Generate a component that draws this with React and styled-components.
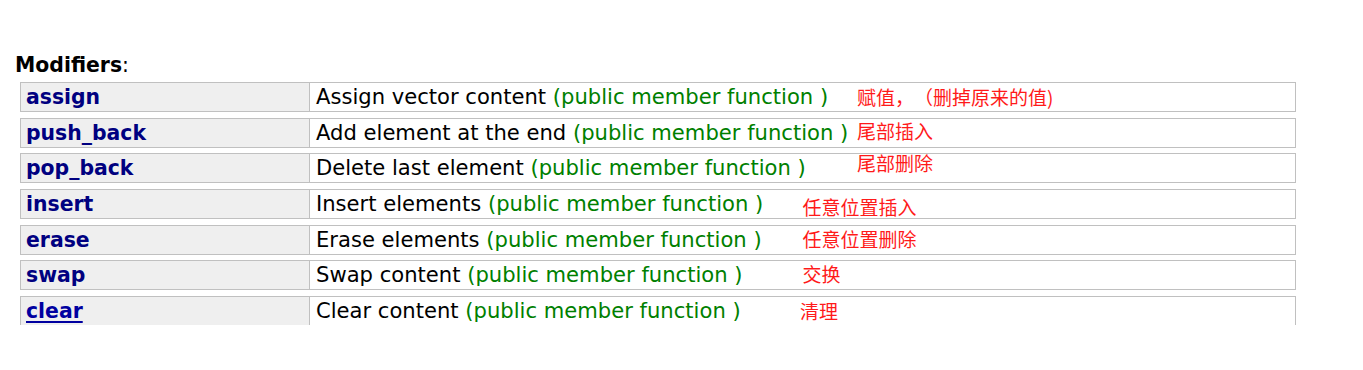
import React from "react";
import styled, { createGlobalStyle } from "styled-components";

const Global = createGlobalStyle`
  html, body { margin: 0; padding: 0; background: #fff; }
  body { font-family: "DejaVu Sans", Verdana, sans-serif; color: #000; }
`;

const Page = styled.div`
  height: 370px;
  padding: 53px 0 0 15px;
  box-sizing: border-box;
  overflow: hidden;
`;

const Title = styled.div`
  font-size: 20.4px;
  line-height: 24px;
  margin-bottom: 5px;
  b { font-weight: bold; }
`;

const Clip = styled.div`
  height: 243px;
  overflow: hidden;
  padding-left: 5px;
`;

const List = styled.div`
  display: flex;
  flex-direction: column;
  gap: 5.67px;
  width: 1276px;
`;

const Row = styled.div`
  position: relative;
  display: grid;
  grid-template-columns: 289px 1fr;
  height: 30px;
  box-sizing: border-box;
  border: 1px solid #c0c0c0;
`;

const Name = styled.div`
  background: #efefef;
  border-right: 1px solid #c0c0c0;
  padding-left: 5px;
  font-size: 20.4px;
  line-height: 28px;
  font-weight: bold;
  color: #000080;
  white-space: nowrap;
`;

const NameLink = styled.a`
  color: #0000a0;
  text-decoration: underline;
  text-underline-offset: 3px;
  text-decoration-thickness: 2px;
`;

const Desc = styled.div`
  padding-left: 6px;
  font-size: 21.1px;
  line-height: 28px;
  white-space: nowrap;
`;

const Kind = styled.span`
  color: #008000;
`;

const Note = styled.span`
  position: absolute;
  left: ${(p) => p.$x - 20}px;
  top: ${(p) => p.$cy - 11}px;
  font-family: "Noto Sans CJK SC", "DejaVu Sans", sans-serif;
  font-size: 19px;
  line-height: 20px;
  color: #ff1a1a;
  white-space: nowrap;
  text-spacing-trim: space-all;
`;

const rows = [
  { name: "assign", desc: "Assign vector content", note: "赋值，（删掉原来的值)", x: 856, cy: 15 },
  { name: "push_back", desc: "Add element at the end", note: "尾部插入", x: 856, cy: 13 },
  { name: "pop_back", desc: "Delete last element", note: "尾部删除", x: 856, cy: 9.5 },
  { name: "insert", desc: "Insert elements", note: "任意位置插入", x: 801.5, cy: 18 },
  { name: "erase", desc: "Erase elements", note: "任意位置删除", x: 801.5, cy: 14 },
  { name: "swap", desc: "Swap content", note: "交换", x: 801.5, cy: 13.5 },
  { name: "clear", desc: "Clear content", note: "清理", x: 799, cy: 15, link: true },
];

export default function App() {
  return (
    <>
      <Global />
      <Page>
        <Title>
          <b>Modifiers</b>:
        </Title>
        <Clip>
          <List>
            {rows.map((r) => (
              <Row key={r.name}>
                <Name>
                  {r.link ? <NameLink href="#clear">{r.name}</NameLink> : r.name}
                </Name>
                <Desc>
                  {r.desc} <Kind>(public member function )</Kind>
                </Desc>
                <Note $x={r.x} $cy={r.cy}>{r.note}</Note>
              </Row>
            ))}
          </List>
        </Clip>
      </Page>
    </>
  );
}
